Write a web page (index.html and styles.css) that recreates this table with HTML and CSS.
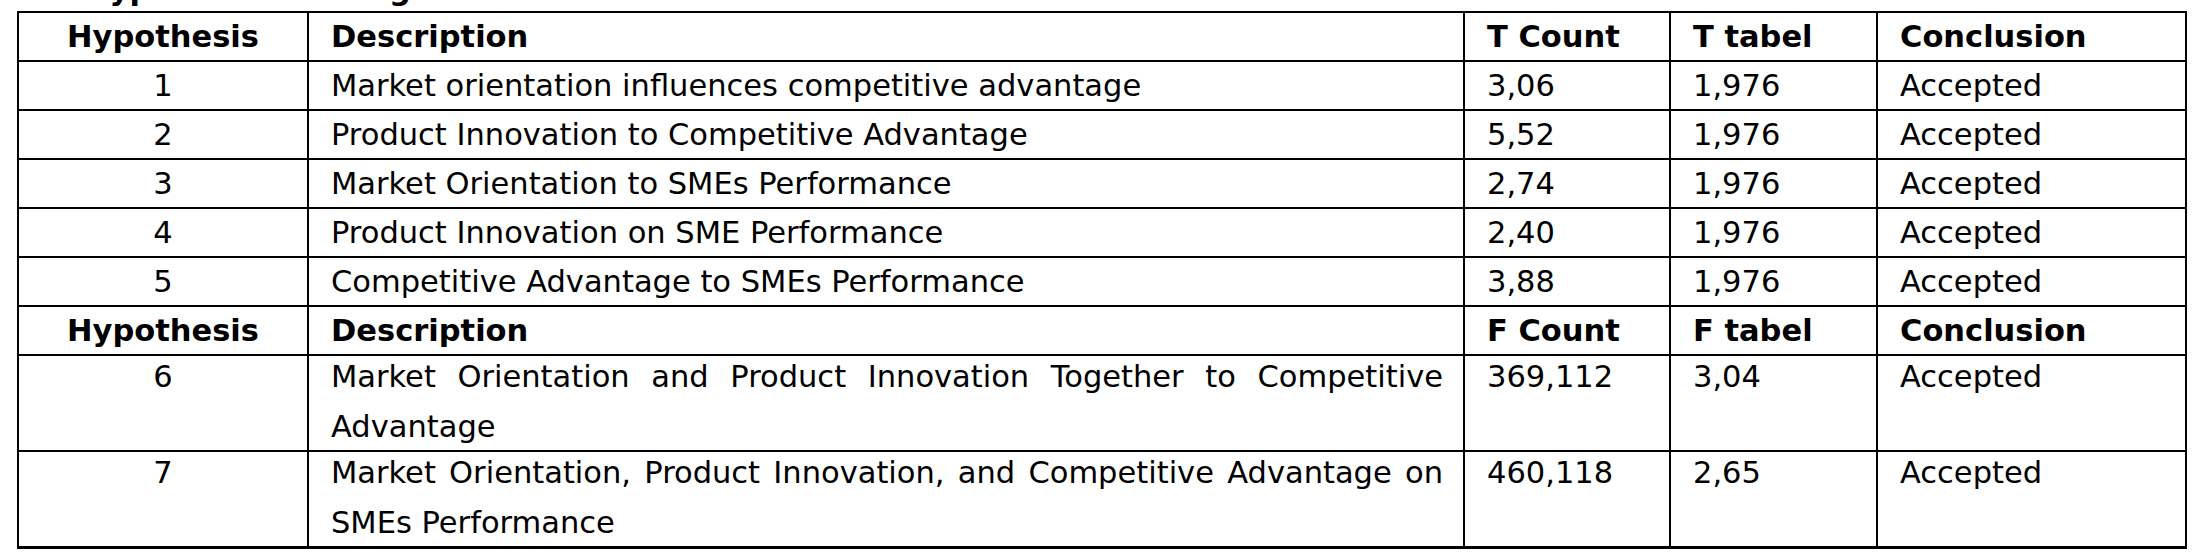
FILE: index.html
```html
<!DOCTYPE html>
<html lang="en">
<head>
<meta charset="utf-8">
<title>Hypothesis Testing</title>
<link rel="stylesheet" href="styles.css">
</head>
<body>
<div class="page">
  <div class="caption">Hypothesis Testing</div>
  <table class="results">
    <colgroup>
      <col class="c-hyp">
      <col class="c-desc">
      <col class="c-count">
      <col class="c-tabel">
      <col class="c-concl">
    </colgroup>
    <tbody>
      <tr class="head">
        <th class="hyp">Hypothesis</th>
        <th>Description</th>
        <th>T Count</th>
        <th>T tabel</th>
        <th>Conclusion</th>
      </tr>
      <tr>
        <td class="hyp">1</td>
        <td class="desc">Market orientation influences competitive advantage</td>
        <td>3,06</td>
        <td>1,976</td>
        <td>Accepted</td>
      </tr>
      <tr>
        <td class="hyp">2</td>
        <td class="desc">Product Innovation to Competitive Advantage</td>
        <td>5,52</td>
        <td>1,976</td>
        <td>Accepted</td>
      </tr>
      <tr>
        <td class="hyp">3</td>
        <td class="desc">Market Orientation to SMEs Performance</td>
        <td>2,74</td>
        <td>1,976</td>
        <td>Accepted</td>
      </tr>
      <tr>
        <td class="hyp">4</td>
        <td class="desc">Product Innovation on SME Performance</td>
        <td>2,40</td>
        <td>1,976</td>
        <td>Accepted</td>
      </tr>
      <tr>
        <td class="hyp">5</td>
        <td class="desc">Competitive Advantage to SMEs Performance</td>
        <td>3,88</td>
        <td>1,976</td>
        <td>Accepted</td>
      </tr>
      <tr class="head">
        <th class="hyp">Hypothesis</th>
        <th>Description</th>
        <th>F Count</th>
        <th>F tabel</th>
        <th>Conclusion</th>
      </tr>
      <tr class="wrap">
        <td class="hyp"><div class="lines">6</div></td>
        <td class="desc"><div class="lines">Market Orientation and Product Innovation Together to Competitive Advantage</div></td>
        <td><div class="lines">369,112</div></td>
        <td><div class="lines">3,04</div></td>
        <td><div class="lines">Accepted</div></td>
      </tr>
      <tr class="wrap last">
        <td class="hyp"><div class="lines">7</div></td>
        <td class="desc"><div class="lines">Market Orientation, Product Innovation, and Competitive Advantage on SMEs Performance</div></td>
        <td><div class="lines">460,118</div></td>
        <td><div class="lines">2,65</div></td>
        <td><div class="lines">Accepted</div></td>
      </tr>
    </tbody>
  </table>
</div>
</body>
</html>
```

FILE: styles.css
```css
html, body {
  margin: 0;
  padding: 0;
  background: #ffffff;
}

body {
  font-family: "DejaVu Sans", "Liberation Sans", sans-serif;
  color: #000000;
}

.page {
  padding-left: 17px;
  width: 2168px;
}

.caption {
  font-weight: bold;
  font-size: 30.5px;
  line-height: 30px;
  margin-top: -25px;
  margin-bottom: 6px;
  padding-left: 67px;
  white-space: nowrap;
}

.results {
  border-collapse: collapse;
  table-layout: fixed;
  width: 2168px;
  font-size: 30.5px;
  line-height: 47px;
}

.c-hyp { width: 290px; }
.c-desc { width: 1156px; }
.c-count { width: 206px; }
.c-tabel { width: 207px; }
.c-concl { width: 309px; }

.results th,
.results td {
  border: 2px solid #000000;
  padding: 0 20px 0 22px;
  vertical-align: top;
  text-align: left;
}

.results th {
  font-weight: bold;
}

.results .hyp {
  text-align: center;
  padding: 0;
}

.results .desc {
  text-align: justify;
}

.results tr.wrap .lines {
  line-height: 50px;
  margin: -4px 0 -2px;
}

.results tr.wrap td {
  height: 94px;
}

.results tr.last td {
  border-bottom-width: 3px;
}
```
